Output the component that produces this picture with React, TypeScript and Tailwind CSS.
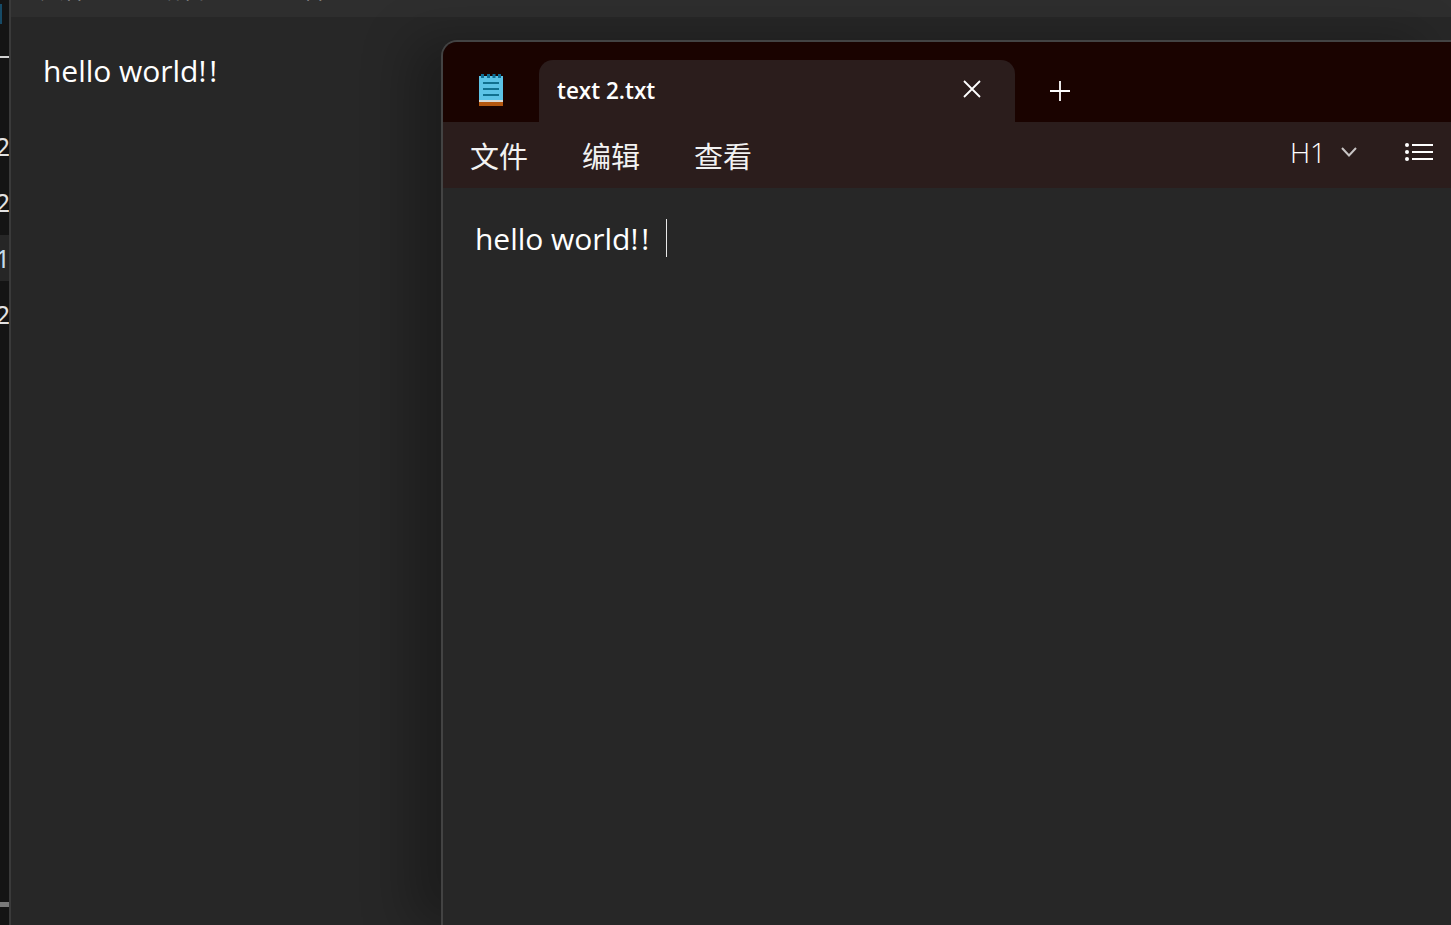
import React from "react";

const font = { fontFamily: '"Noto Sans", "Noto Sans CJK SC", sans-serif' };
const textFont = { fontFamily: '"Open Sans", "Noto Sans", sans-serif' };

function NotepadIcon() {
  return (
    <svg width="26" height="34" viewBox="0 0 26 34" aria-hidden="true">
      <rect x="1" y="3" width="24" height="24" fill="#5cc3e6" />
      <rect x="1" y="27" width="24" height="2" fill="#d9d9d4" />
      <rect x="1" y="29" width="24" height="4" fill="#b4570f" />
      <rect x="3" y="1" width="3" height="4" fill="#0f6f96" />
      <rect x="9" y="1" width="3" height="4" fill="#0f6f96" />
      <rect x="14.5" y="1" width="3" height="4" fill="#0f6f96" />
      <rect x="20" y="1" width="3" height="4" fill="#0f6f96" />
      <rect x="5" y="9" width="16" height="2" fill="#10708f" />
      <rect x="5" y="15" width="16" height="2" fill="#10708f" />
      <rect x="5" y="21" width="16" height="2" fill="#10708f" />
    </svg>
  );
}

function LineNum({ n, active }: { n: string; active?: boolean }) {
  return (
    <div
      className={`h-[46px] shrink-0 flex items-center justify-end text-[25px] leading-none ${
        active ? "bg-[#262626] text-[#c4dcec]" : "text-[#e2e2e2]"
      }`}
    >
      <span className="-mr-[1px]">{n}</span>
    </div>
  );
}

function Hello() {
  return (
    <div className="text-[30px] leading-[40px] tracking-[-0.03px] text-white" style={textFont}>
      hello world!<span className="ml-[3px]">!</span>
    </div>
  );
}

export default function App() {
  return (
    <div className="w-[1451px] h-[925px] overflow-hidden flex bg-[#272727] text-white" style={font}>
      <aside className="w-[11px] shrink-0 bg-[#141414] border-r-2 border-[#3a3a3a] flex flex-col overflow-hidden">
        <div className="h-[56px] shrink-0 pt-[4px]">
          <div className="w-[2px] h-[20px] bg-[#164a66]" />
        </div>
        <div className="h-[2px] shrink-0 bg-[#d0d0d0]" />
        <div className="h-[65px] shrink-0" />
        <LineNum n="2" />
        <div className="h-[10px] shrink-0" />
        <LineNum n="2" />
        <div className="h-[10px] shrink-0" />
        <LineNum n="1" active />
        <div className="h-[10px] shrink-0" />
        <LineNum n="2" />
        <div className="flex-1" />
        <div className="h-[5px] shrink-0 bg-[#7a7a7a]" />
        <div className="h-[18px] shrink-0" />
      </aside>

      <div className="flex-1 min-w-0 flex flex-col">
        <div className="h-[17px] shrink-0 bg-[#2e2e2e] overflow-hidden">
          <div className="flex text-[#bdbdbd] text-[24px] leading-none -mt-[23px] pl-[29px]">
            <span>文件</span>
            <span className="ml-[69px]">编辑</span>
            <span className="ml-[72px]">查看</span>
          </div>
        </div>

        <div className="flex-1 min-h-0 flex">
          <div className="w-[431px] shrink-0 pl-[32px] pt-[34px]">
            <Hello />
          </div>

          <div className="flex-1 min-w-0 mt-[23px] -ml-[1px] flex flex-col rounded-tl-[16px] border-t-2 border-l-2 border-[#434343] bg-[#272727] shadow-[-30px_0_50px_rgba(0,0,0,0.28)] overflow-hidden">
            <div className="h-[80px] shrink-0 bg-[#1a0300] flex pt-[18px]">
              <div className="w-[96px] shrink-0 flex justify-center pt-[13px]">
                <NotepadIcon />
              </div>
              <div className="w-[476px] shrink-0 h-[62px] bg-[#2b1d1c] rounded-t-[14px] flex items-center pl-[18px] pr-[32px] justify-between">
                <span className="text-[22.5px] font-semibold leading-none mt-[1px]" style={{ fontFamily: '"Open Sans", sans-serif' }}>text 2.txt</span>
                <svg width="22" height="22" viewBox="0 0 22 22" fill="none" stroke="white" strokeWidth="1.8" className="-mt-[4px]" aria-hidden="true">
                  <path d="M3 3 L19 19 M19 3 L3 19" />
                </svg>
              </div>
              <div className="pl-[33px] pt-[19px]">
                <svg width="24" height="24" viewBox="0 0 24 24" fill="none" stroke="white" strokeWidth="1.8" aria-hidden="true">
                  <path d="M12 2 V22 M2 12 H22" />
                </svg>
              </div>
            </div>

            <div className="h-[66px] shrink-0 bg-[#2b1d1c] flex items-center pl-[27px] pr-[18px] justify-between">
              <div className="flex gap-[54px] text-[29px] leading-none text-[#f2f2f2] mt-[1px]" style={{ fontFamily: '"Noto Sans CJK SC", sans-serif' }}>
                <span>文件</span>
                <span>编辑</span>
                <span>查看</span>
              </div>
              <div className="flex items-center -mt-[7px]">
                <span className="text-[28px] leading-none text-white" style={{ fontFamily: '"Open Sans", sans-serif', fontWeight: 300 }}>H1</span>
                <svg width="18" height="12" viewBox="0 0 18 12" fill="none" stroke="#c8c4c4" strokeWidth="2" className="ml-[14px]" aria-hidden="true">
                  <path d="M2 2 L9 9.5 L16 2" />
                </svg>
                <svg width="28" height="18" viewBox="0 0 28 18" fill="none" stroke="white" strokeWidth="2" className="ml-[47px]" aria-hidden="true">
                  <path d="M7 2 H28 M7 9 H28 M7 16 H28" />
                  <circle cx="2" cy="2" r="2" fill="white" stroke="none" />
                  <circle cx="2" cy="9" r="2" fill="white" stroke="none" />
                  <circle cx="2" cy="16" r="2" fill="white" stroke="none" />
                </svg>
              </div>
            </div>

            <div className="flex-1 min-h-0 pl-[32px] pt-[31px] flex items-start bg-[#272727]">
              <Hello />
              <div className="ml-[17px] w-[1px] h-[38px] bg-[#e8e8e8]" />
            </div>
          </div>
        </div>
      </div>
    </div>
  );
}
